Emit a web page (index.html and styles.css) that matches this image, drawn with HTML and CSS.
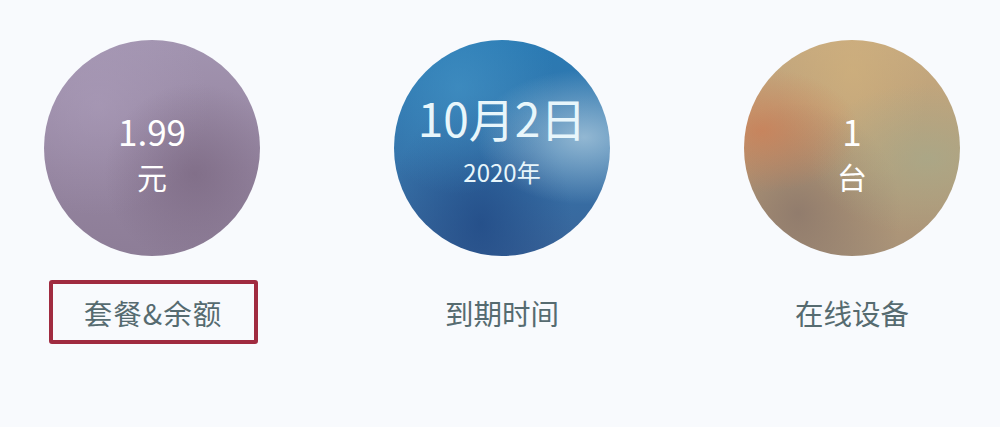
FILE: index.html
```html
<!DOCTYPE html>
<html lang="zh-CN">
<head>
    <meta charset="UTF-8">
    <meta name="viewport" content="width=device-width, initial-scale=1.0">
    <title>账户概览</title>
    <link rel="stylesheet" href="styles.css">
</head>
<body>

    <div class="stats">
        <div class="stat">
            <div class="ball ball-plan">
                <span class="big">1.99</span>
                <span class="unit">元</span>
            </div>
            <div class="label selected">套餐&amp;余额</div>
        </div>

        <div class="stat">
            <div class="ball ball-date">
                <span class="date">10月2日</span>
                <span class="year">2020年</span>
            </div>
            <div class="label">到期时间</div>
        </div>

        <div class="stat">
            <div class="ball ball-device">
                <span class="big">1</span>
                <span class="unit">台</span>
            </div>
            <div class="label">在线设备</div>
        </div>
    </div>

</body>
</html>
```

FILE: styles.css
```css
/* General */
body {
    margin: 0;
    background-color: #f8fafd;
    font-family: 'Noto Sans CJK SC', 'Noto Sans', sans-serif;
}

/* Stat row */
.stats {
    display: flex;
    justify-content: space-between;
    padding: 40px 40px 0 44px;
}

.stat {
    display: flex;
    flex-direction: column;
    align-items: center;
    width: 216px;
}

/* Circles */
.ball {
    width: 216px;
    height: 216px;
    border-radius: 50%;
    display: flex;
    flex-direction: column;
    align-items: center;
    justify-content: center;
    color: #fff;
}

.ball-plan {
    background:
        radial-gradient(circle at 70% 62%, rgba(115, 95, 120, 0.55) 0, rgba(115, 95, 120, 0) 45%),
        radial-gradient(circle at 25% 30%, rgba(175, 160, 190, 0.5) 0, rgba(175, 160, 190, 0) 50%),
        linear-gradient(180deg, #a294b0 0%, #94849f 60%, #8d7d97 100%);
}

.ball-date {
    background:
        radial-gradient(ellipse at 88% 45%, rgba(170, 200, 220, 0.8) 0, rgba(170, 200, 220, 0) 40%),
        radial-gradient(ellipse at 30% 22%, rgba(70, 150, 200, 0.6) 0, rgba(70, 150, 200, 0) 45%),
        radial-gradient(ellipse at 40% 85%, rgba(30, 70, 130, 0.7) 0, rgba(30, 70, 130, 0) 50%),
        linear-gradient(180deg, #2a7ab3 0%, #3474ab 50%, #3a6499 100%);
}

.ball-device {
    background:
        radial-gradient(ellipse at 8% 42%, rgba(205, 125, 85, 0.75) 0, rgba(205, 125, 85, 0) 35%),
        radial-gradient(ellipse at 85% 55%, rgba(165, 170, 140, 0.7) 0, rgba(165, 170, 140, 0) 45%),
        radial-gradient(ellipse at 25% 80%, rgba(135, 115, 105, 0.75) 0, rgba(135, 115, 105, 0) 45%),
        radial-gradient(ellipse at 50% 15%, rgba(210, 178, 125, 0.6) 0, rgba(210, 178, 125, 0) 50%),
        linear-gradient(180deg, #c6a97e 0%, #b89d78 60%, #a89278 100%);
}

.ball .big {
    font-size: 35px;
    line-height: 1.4;
    margin-top: 6px;
}

.ball .unit {
    font-size: 30px;
    line-height: 1.4;
}

.ball .date {
    font-size: 46px;
    line-height: 1.4;
    color: #e8f6fb;
    margin-top: -22px;
}

.ball .year {
    font-size: 24px;
    line-height: 1.4;
    color: #e8f6fb;
    margin-top: 6px;
}

/* Labels */
.label {
    margin-top: 24px;
    width: 201px;
    height: 56px;
    border: 4px solid transparent;
    border-radius: 3px;
    display: flex;
    align-items: center;
    justify-content: center;
    font-size: 28.5px;
    color: #566b70;
}

.label.selected {
    border-color: #a02b40;
    margin-left: 2px;
    letter-spacing: 1px;
}
```
